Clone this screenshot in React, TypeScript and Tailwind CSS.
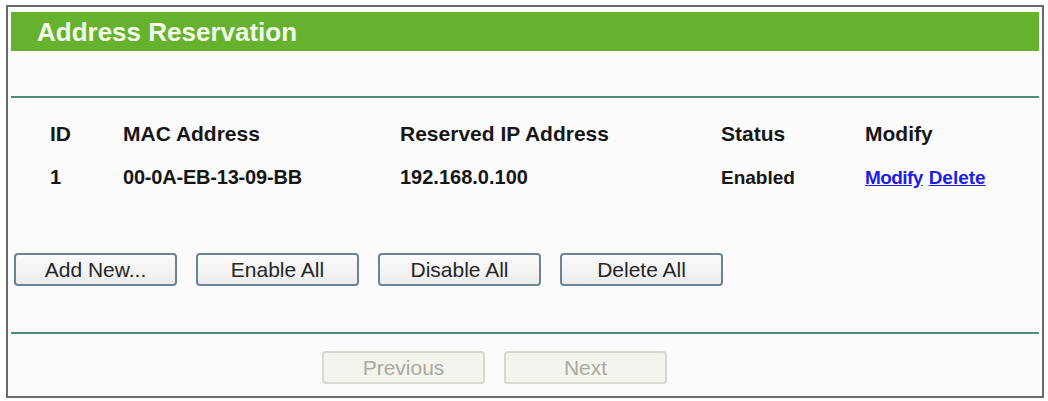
import React from "react";

const font = { fontFamily: '"Liberation Sans", Arial, sans-serif' };

function Btn({ label, disabled }: { label: string; disabled?: boolean }) {
  return (
    <button
      className={
        disabled
          ? "w-[163px] h-[33px] rounded-[4px] border-2 border-[#d8d8d0] bg-[#f4f4ee] text-[21px] leading-none text-[#a9a9a1]"
          : "w-[163px] h-[33px] rounded-[4px] border-2 border-[#6c8296] bg-gradient-to-b from-[#fbfbfb] to-[#ececec] text-[21px] leading-none text-[#262626]"
      }
      style={font}
    >
      {label}
    </button>
  );
}

export default function App() {
  return (
    <div className="w-[1048px] h-[401px] bg-white pt-[5px] pl-[6px]" style={font}>
      <div className="w-[1038px] h-[393px] border-2 border-[#6a6a6a] bg-[#fbfbfb] pt-[5px] px-[3px] flex flex-col">
        <div className="h-[39px] bg-[#66b22f] flex items-center pl-[26px]">
          <span className="text-[26px] font-bold text-[#f3fbe9] leading-none">Address Reservation</span>
        </div>
        <div className="mt-[45px] h-[2px] bg-[#4f8d7b]" />
        <div className="mt-[14px] pl-[39px] grid grid-cols-[73px_277px_321px_144px_1fr] text-[#161616] font-bold">
          <div className="h-[43px] flex items-center text-[21px]">ID</div>
          <div className="h-[43px] flex items-center text-[21px]">MAC Address</div>
          <div className="h-[43px] flex items-center text-[21px]">Reserved IP Address</div>
          <div className="h-[43px] flex items-center text-[21px]">Status</div>
          <div className="h-[43px] flex items-center text-[21px]">Modify</div>
          <div className="h-[43px] flex items-center text-[20px]">1</div>
          <div className="h-[43px] flex items-center text-[20px] tracking-[-0.2px]">00-0A-EB-13-09-BB</div>
          <div className="h-[43px] flex items-center text-[20px]">192.168.0.100</div>
          <div className="h-[43px] flex items-center pt-[3px] text-[19px]">Enabled</div>
          <div className="h-[43px] flex items-center pt-[3px] text-[19px] gap-[6px] text-[#1d1dea]">
            <a className="underline tracking-[-0.6px]" href="#">Modify</a>
            <a className="underline" href="#">Delete</a>
          </div>
        </div>
        <div className="mt-[55px] pl-[3px] flex gap-[19px]">
          <Btn label="Add New..." />
          <Btn label="Enable All" />
          <Btn label="Disable All" />
          <Btn label="Delete All" />
        </div>
        <div className="mt-[46px] h-[2px] bg-[#4f8d7b]" />
        <div className="mt-[17px] pl-[311px] flex gap-[19px]">
          <Btn label="Previous" disabled />
          <Btn label="Next" disabled />
        </div>
      </div>
    </div>
  );
}
